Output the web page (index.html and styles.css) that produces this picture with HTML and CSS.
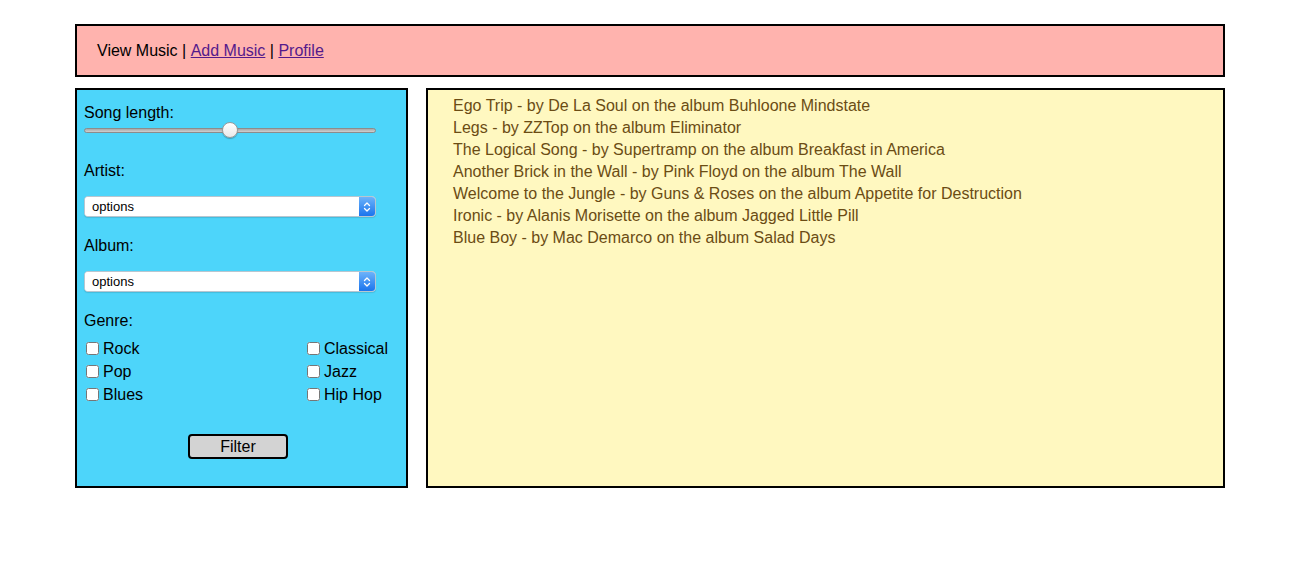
FILE: index.html
```html
<!DOCTYPE html>
<html>
<head>
<meta charset="utf-8">
<title>Music</title>
<link rel="stylesheet" href="styles.css">
</head>
<body>
<div class="page">
  <header class="nav">
    <span>View Music</span>&nbsp;|&nbsp;<a href="#add">Add Music</a>&nbsp;|&nbsp;<a href="#profile">Profile</a>
  </header>
  <div class="main">
    <aside class="filters">
      <label class="lbl first">Song length:</label>
      <input class="slider" type="range" min="0" max="100" value="50">
      <label class="lbl gap-a">Artist:</label>
      <div class="select">
        <select><option>options</option></select>
        <span class="arrow"><svg width="8" height="12" viewBox="0 0 8 12"><path d="M1.5 4.5 L4 2 L6.5 4.5 M1.5 7.5 L4 10 L6.5 7.5" fill="none" stroke="#fff" stroke-width="1.3" stroke-linecap="round" stroke-linejoin="round"/></svg></span>
      </div>
      <label class="lbl gap-b">Album:</label>
      <div class="select">
        <select><option>options</option></select>
        <span class="arrow"><svg width="8" height="12" viewBox="0 0 8 12"><path d="M1.5 4.5 L4 2 L6.5 4.5 M1.5 7.5 L4 10 L6.5 7.5" fill="none" stroke="#fff" stroke-width="1.3" stroke-linecap="round" stroke-linejoin="round"/></svg></span>
      </div>
      <label class="lbl gap-c">Genre:</label>
      <div class="genres">
        <label class="chk"><input type="checkbox">Rock</label>
        <label class="chk"><input type="checkbox">Classical</label>
        <label class="chk"><input type="checkbox">Pop</label>
        <label class="chk"><input type="checkbox">Jazz</label>
        <label class="chk"><input type="checkbox">Blues</label>
        <label class="chk"><input type="checkbox">Hip Hop</label>
      </div>
      <button class="btn" type="button">Filter</button>
    </aside>
    <section class="songs">
      <ul>
        <li>Ego Trip - by De La Soul on the album Buhloone Mindstate</li>
        <li>Legs - by ZZTop on the album Eliminator</li>
        <li>The Logical Song - by Supertramp on the album Breakfast in America</li>
        <li>Another Brick in the Wall - by Pink Floyd on the album The Wall</li>
        <li>Welcome to the Jungle - by Guns &amp; Roses on the album Appetite for Destruction</li>
        <li>Ironic - by Alanis Morisette on the album Jagged Little Pill</li>
        <li>Blue Boy - by Mac Demarco on the album Salad Days</li>
      </ul>
    </section>
  </div>
</div>
</body>
</html>
```

FILE: styles.css
```css
html, body {
  margin: 0;
  padding: 0;
  background: #fff;
  font-family: "Liberation Sans", Arial, sans-serif;
  font-size: 16px;
  color: #000;
}

.page {
  padding: 24px 75px 0 75px;
}

.nav {
  box-sizing: border-box;
  height: 53px;
  border: 2px solid #000;
  background: #ffb3ae;
  display: flex;
  align-items: center;
  padding-left: 20px;
  line-height: 18px;
  white-space: pre;
}

.nav a {
  color: #551a8b;
  text-decoration: underline;
}

.main {
  display: flex;
  gap: 18px;
  margin-top: 11px;
}

.filters {
  box-sizing: border-box;
  width: 333px;
  height: 400px;
  border: 2px solid #000;
  background: #4dd5fa;
  padding: 0 7px;
  display: flex;
  flex-direction: column;
  align-items: flex-start;
}

.lbl {
  display: block;
  line-height: 18px;
}

.lbl.first { margin-top: 14px; }
.lbl.gap-a { margin-top: 24px; margin-bottom: 16px; }
.lbl.gap-b { margin-top: 20px; margin-bottom: 16px; }
.lbl.gap-c { margin-top: 20px; }

.slider {
  -webkit-appearance: none;
  appearance: none;
  width: 292px;
  height: 16px;
  margin: 0;
  background: transparent;
}

.slider::-webkit-slider-runnable-track {
  box-sizing: border-box;
  height: 5px;
  background: linear-gradient(#a9a9a9, #cfcfcf);
  border: 1px solid #8c8c8c;
  border-radius: 3px;
}

.slider::-webkit-slider-thumb {
  -webkit-appearance: none;
  appearance: none;
  width: 16px;
  height: 16px;
  margin-top: -6.5px;
  border-radius: 50%;
  background: linear-gradient(#ffffff, #e9e9e9);
  border: 1px solid #9a9a9a;
  box-shadow: 0 1px 1px rgba(0,0,0,0.25);
  box-sizing: border-box;
}

.select {
  box-sizing: border-box;
  width: 292px;
  height: 21px;
  display: flex;
  background: #fff;
  border: 1px solid #b8c6d0;
  border-radius: 4px;
  overflow: hidden;
  box-shadow: 0 1px 1px rgba(0,0,0,0.12);
}

.select select {
  -webkit-appearance: none;
  appearance: none;
  flex: 1;
  border: none;
  background: #fff;
  font-family: "Liberation Sans", Arial, sans-serif;
  font-size: 13px;
  color: #000;
  padding: 0 0 0 7px;
  margin: 0;
  height: 19px;
  outline: none;
}

.arrow {
  width: 16px;
  display: flex;
  align-items: center;
  justify-content: center;
  background: linear-gradient(#6cb3fa, #1b74ed);
}

.genres {
  display: grid;
  grid-template-columns: 221px auto;
  margin-top: 7px;
  width: 100%;
}

.chk {
  display: flex;
  align-items: center;
  height: 23px;
  line-height: 18px;
}

.chk input {
  width: 13px;
  height: 13px;
  margin: 0 4px 0 2px;
}

.btn {
  box-sizing: border-box;
  width: 100px;
  height: 25px;
  margin: 28px 0 0 104px;
  border: 2px solid #000;
  border-radius: 4px;
  background: #d3d3d3;
  font-family: "Liberation Sans", Arial, sans-serif;
  font-size: 16px;
  color: #000;
  padding: 0;
  line-height: 21px;
}

.songs {
  box-sizing: border-box;
  flex: 1;
  height: 400px;
  border: 2px solid #000;
  background: #fff8c0;
  color: #6b4c14;
}

.songs ul {
  list-style: none;
  margin: 0;
  padding: 5px 0 0 25px;
}

.songs li {
  line-height: 22px;
}
```
